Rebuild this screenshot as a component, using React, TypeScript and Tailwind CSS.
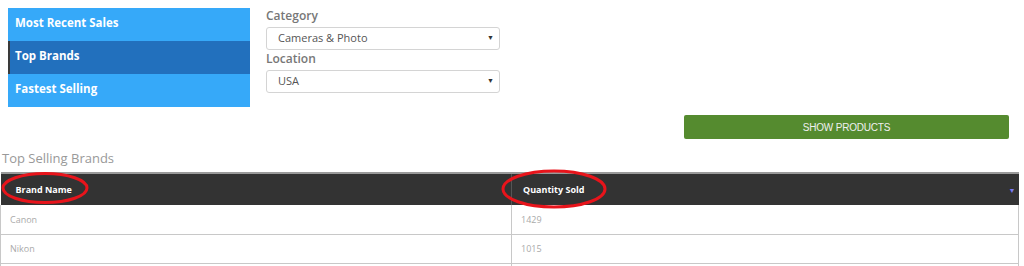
import { useState } from 'react';

const navItems = ['Most Recent Sales', 'Top Brands', 'Fastest Selling'];

const brands = [
  { name: 'Canon', qty: '1429' },
  { name: 'Nikon', qty: '1015' },
  { name: '', qty: '' },
];

function Select({ value }: { value: string }) {
  return (
    <div className="flex h-[23px] w-[234px] items-center justify-between rounded-[3px] border border-[#d4d4d4] bg-white pl-[11px] pr-[5px] text-[11px] text-[#555]">
      <span>{value}</span>
      <span className="text-[7px] text-[#333]">▼</span>
    </div>
  );
}

export default function App() {
  const [active, setActive] = useState(1);

  return (
    <div className="relative h-[266px] w-[1024px] overflow-hidden bg-white font-['Open_Sans',sans-serif]">
      <div className="flex pt-[8px]">
        <ul className="ml-[8px] w-[242px]">
          {navItems.map((item, i) => (
            <li
              key={item}
              onClick={() => setActive(i)}
              className={`flex h-[33px] cursor-pointer items-center pb-[3px] text-[11.5px] font-bold text-white ${
                i === active ? 'border-l-2 border-[#3a3a3a] bg-[#2270bd] pl-[5px]' : 'bg-[#36a9f9] pl-[7px]'
              }`}
            >
              {item}
            </li>
          ))}
        </ul>
        <div className="ml-[16px] flex flex-col">
          <label className="text-[12px] font-semibold leading-[16px] text-[#777]">Category</label>
          <div className="mt-[3px]">
            <Select value="Cameras & Photo" />
          </div>
          <label className="mt-[1px] text-[12px] font-semibold leading-[16px] text-[#777]">Location</label>
          <div className="mt-[3px]">
            <Select value="USA" />
          </div>
        </div>
      </div>

      <div className="mt-[8px] flex justify-end pr-[15px]">
        <button className="h-[24px] w-[325px] rounded-[2px] bg-[#558b2f] font-['Liberation_Sans',sans-serif] text-[10px] tracking-[-0.2px] text-[#f0f0f0]">
          SHOW PRODUCTS
        </button>
      </div>

      <h3 className="mt-[10px] pl-[2px] text-[13px] leading-[18px] text-[#999]">Top Selling Brands</h3>

      <table className="mt-[5px] w-[1019px] border-collapse text-left">
        <thead>
          <tr className="h-[32px] border-t-2 border-[#9a9a9a] bg-[#333]">
            <th className="w-[511px] border-r border-[#555] pl-[15px] text-[9px] font-bold text-white">Brand Name</th>
            <th className="relative pl-[11px] text-[9px] font-bold text-white">
              Quantity Sold
              <span className="absolute right-[3px] top-[12px] text-[7px] text-[#7b7bf0]">▼</span>
            </th>
          </tr>
        </thead>
        <tbody>
          {brands.map((b, i) => (
            <tr key={i} className="h-[29px] border-b border-[#c8c8c8]">
              <td className="border-l border-r border-[#c8c8c8] pl-[9px] text-[9px] text-[#aaa]">{b.name}</td>
              <td className="border-r border-[#c8c8c8] pl-[9px] text-[9px] text-[#aaa]">{b.qty}</td>
            </tr>
          ))}
        </tbody>
      </table>

      {/* red annotation marks drawn over the table header */}
      <svg className="pointer-events-none absolute left-0 top-0" width="1024" height="266">
        <ellipse cx="45" cy="188" rx="42" ry="14.5" fill="none" stroke="#e8141b" strokeWidth="3" />
        <ellipse cx="554" cy="189" rx="51" ry="18" fill="none" stroke="#e8141b" strokeWidth="3" />
      </svg>
    </div>
  );
}
